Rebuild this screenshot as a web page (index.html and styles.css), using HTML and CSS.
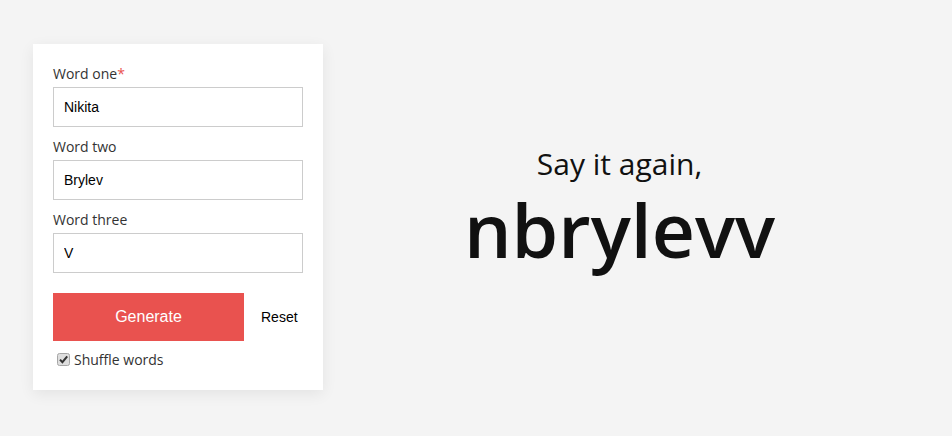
FILE: index.html
```html
<!DOCTYPE html>
<html>
<head>
<meta charset="utf-8">
<link rel="stylesheet" href="styles.css">
</head>
<body>
<div class="page">
  <form class="card">
    <div class="field">
      <label class="label">Word one<span class="req">*</span></label>
      <input class="input" type="text" value="Nikita">
    </div>
    <div class="field">
      <label class="label">Word two</label>
      <input class="input" type="text" value="Brylev">
    </div>
    <div class="field">
      <label class="label">Word three</label>
      <input class="input" type="text" value="V">
    </div>
    <div class="actions">
      <button class="btn" type="button">Generate</button>
      <button class="reset" type="button">Reset</button>
    </div>
    <label class="check">
      <svg class="box" width="13" height="13" viewBox="0 0 13 13">
        <rect x="0.5" y="0.5" width="12" height="12" rx="2" fill="#dedede" stroke="#a6a6a6"/>
        <path d="M3 6.6 L5.4 9.2 L10.2 3.4" fill="none" stroke="#333" stroke-width="2"/>
      </svg>
      <span>Shuffle words</span>
    </label>
  </form>
  <div class="result">
    <div class="say">Say it again,</div>
    <div class="word">nbrylevv</div>
  </div>
</div>
</body>
</html>
```
FILE: styles.css
```css
html, body { margin: 0; padding: 0; }
body {
  background: #f4f4f4;
  font-family: "Open Sans", sans-serif;
  color: #333;
  width: 952px;
  height: 436px;
  overflow: hidden;
}
.page {
  display: flex;
  align-items: flex-start;
  padding: 44px 0 0 33px;
}
.card {
  width: 250px;
  background: #fff;
  padding: 20px 20px 21px 20px;
  box-shadow: 0 4px 14px rgba(0,0,0,0.07);
  margin: 0;
}
.field { display: flex; flex-direction: column; margin-bottom: 10px; }
.label { font-size: 14px; line-height: 20px; height: 23px; color: #333; }
.req { color: #e9524f; }
.input {
  box-sizing: border-box;
  height: 40px;
  width: 250px;
  border: 1px solid #ccc;
  padding: 0 10px;
  font-family: "Liberation Sans", Arial, sans-serif;
  font-size: 14px;
  color: #000;
  outline: none;
  margin: 0;
}
.actions { display: flex; align-items: center; margin-top: 20px; }
.btn {
  width: 191px;
  height: 48px;
  background: #e9524f;
  border: 0;
  color: #fff;
  font-family: "Liberation Sans", Arial, sans-serif;
  font-size: 16px;
  padding: 0;
}
.reset {
  background: none;
  border: 0;
  padding: 0;
  margin-left: 17px;
  font-family: "Liberation Sans", Arial, sans-serif;
  font-size: 14px;
  color: #000;
}
.check {
  display: flex;
  align-items: center;
  margin-top: 9px;
  font-size: 14px;
  color: #333;
  padding-left: 4px;
}
.box { margin-right: 4px; flex: none; }
.result {
  flex: 1;
  text-align: center;
  padding-top: 100px;
  padding-right: 36px;
}
.say { font-size: 30px; line-height: 40px; color: #111; }
.word { font-size: 75px; font-weight: 600; line-height: 90px; color: #111; }
```
